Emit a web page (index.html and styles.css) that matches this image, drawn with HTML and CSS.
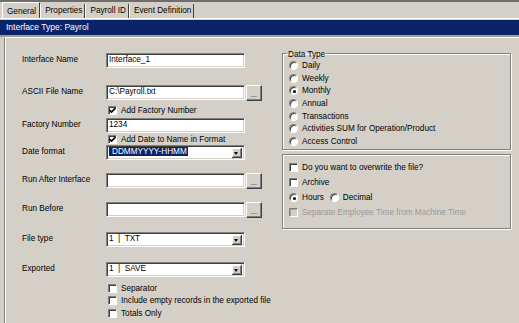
FILE: index.html
```html
<!DOCTYPE html>
<html lang="en">
<head>
    <meta charset="UTF-8">
    <title>Interface Settings</title>
    <link rel="stylesheet" href="styles.css">
</head>
<body>
    <div class="tabs">
        <div class="tab active">General</div>
        <div class="tab">Properties</div>
        <div class="tab">Payroll ID</div>
        <div class="tab">Event Definition</div>
    </div>
    <div class="caption">Interface Type: Payrol</div>

    <div class="panel">
        <div class="form">
            <div class="row first">
                <span class="label">Interface Name</span>
                <div class="edit">Interface_1</div>
            </div>
            <div class="row second">
                <span class="label">ASCII File Name</span>
                <div class="edit">C:\Payroll.txt</div>
                <div class="browse">...</div>
            </div>
            <div class="check below">
                <span class="box"><svg width="7" height="7" viewBox="0 0 7 7"><path d="M0.5 3 L2.5 5 L6.5 1" fill="none" stroke="#000" stroke-width="1.6"/></svg></span>
                Add Factory Number
            </div>
            <div class="row tight">
                <span class="label">Factory Number</span>
                <div class="edit">1234</div>
            </div>
            <div class="check between">
                <span class="box"><svg width="7" height="7" viewBox="0 0 7 7"><path d="M0.5 3 L2.5 5 L6.5 1" fill="none" stroke="#000" stroke-width="1.6"/></svg></span>
                Add Date to Name in Format
            </div>
            <div class="row closer">
                <span class="label">Date format</span>
                <div class="edit combo"><span class="picked">DDMMYYYY-HHMM</span><span class="drop"></span></div>
            </div>
            <div class="row near">
                <span class="label">Run After Interface</span>
                <div class="edit"></div>
                <div class="browse">...</div>
            </div>
            <div class="row">
                <span class="label">Run Before</span>
                <div class="edit"></div>
                <div class="browse">...</div>
            </div>
            <div class="row wide">
                <span class="label">File type</span>
                <div class="edit combo">1&nbsp; |&nbsp; TXT<span class="drop"></span></div>
            </div>
            <div class="row wide">
                <span class="label">Exported</span>
                <div class="edit combo">1&nbsp; |&nbsp; SAVE<span class="drop"></span></div>
            </div>
            <div class="check after">
                <span class="box"></span>Separator
            </div>
            <div class="check list">
                <span class="box"></span>Include empty records in the exported file
            </div>
            <div class="check list">
                <span class="box"></span>Totals Only
            </div>
        </div>

        <div class="side">
            <fieldset class="group types">
                <legend>Data Type</legend>
                <div class="option"><span class="radio"></span>Daily</div>
                <div class="option"><span class="radio"></span>Weekly</div>
                <div class="option"><span class="radio on"></span>Monthly</div>
                <div class="option"><span class="radio"></span>Annual</div>
                <div class="option"><span class="radio"></span>Transactions</div>
                <div class="option"><span class="radio"></span>Activities SUM for Operation/Product</div>
                <div class="option"><span class="radio"></span>Access Control</div>
            </fieldset>

            <fieldset class="group extras">
                <div class="option"><span class="box"></span>Do you want to overwrite the file?</div>
                <div class="option"><span class="box"></span>Archive</div>
                <div class="option">
                    <span class="radio on"></span>Hours
                    <span class="radio spaced"></span>Decimal
                </div>
                <div class="option disabled"><span class="box"></span>Separate Employee Time from Machine Time</div>
            </fieldset>
        </div>
    </div>
</body>
</html>
```

FILE: styles.css
```css
body {
    margin: 0;
    width: 519px;
    height: 323px;
    overflow: hidden;
    background: #d4d0c8;
    font-family: "Liberation Sans", Arial, sans-serif;
    font-size: 8.2px;
    color: #000;
}

/* tab strip */
.tabs {
    display: flex;
    align-items: flex-end;
    height: 16px;
    padding-left: 2px;
    border-top: 2px solid #6e6e6e;
    border-bottom: 1px solid #fff;
}
.tab {
    height: 14px;
    line-height: 14px;
    padding: 0 2px 0 4px;
    border-left: 1px solid #fff;
    border-right: 1px solid #404040;
}
.tab.active {
    height: 16px;
    line-height: 17px;
    padding-right: 3px;
    border-top: 1px solid #fff;
    box-sizing: border-box;
}

.caption {
    margin-top: 1px;
    height: 15px;
    line-height: 15px;
    padding-left: 6px;
    background: #0a246a;
    color: #fff;
    font-size: 8.5px;
    border-bottom: 2px solid #a09c94;
}

.panel {
    display: flex;
    margin-left: 4px;
    height: 285px;
    border-top: 1px solid #fff;
    border-left: 1px solid #808080;
    box-shadow: inset 1px 0 #fff;
}

/* left column */
.form {
    width: 257px;
    padding-left: 17px;
}
.row {
    display: flex;
    align-items: center;
    height: 15px;
    margin-top: 14px;
}
.row.first {
    margin-top: 15px;
}
.row.second {
    margin-top: 17px;
}
.row.tight {
    margin-top: 3px;
}
.row.closer {
    margin-top: 1px;
}
.row.near {
    margin-top: 13px;
}
.row.wide {
    margin-top: 15px;
}
.label {
    width: 84px;
    margin-bottom: 2px;
}
.edit {
    position: relative;
    box-sizing: border-box;
    width: 139px;
    height: 15px;
    line-height: 12px;
    padding-left: 2px;
    background: #fff;
    border-top: 1px solid #808080;
    border-left: 1px solid #808080;
    border-right: 1px solid #fff;
    border-bottom: 1px solid #fff;
    box-shadow: inset 1px 1px #404040, inset -1px -1px #d4d0c8;
    white-space: nowrap;
}
.combo .drop {
    position: absolute;
    right: 2px;
    top: 2px;
    width: 9px;
    height: 9px;
    background: #d4d0c8;
    border-right: 1px solid #404040;
    border-bottom: 1px solid #404040;
    box-shadow: inset 1px 1px #fff, inset -1px -1px #808080;
}
.combo .drop::after {
    content: "";
    position: absolute;
    left: 2px;
    top: 4px;
    border-left: 2.5px solid transparent;
    border-right: 2.5px solid transparent;
    border-top: 3px solid #000;
}
.picked {
    display: inline-block;
    padding: 0 1px 0 3px;
    line-height: 9px;
    margin-top: 1px;
    background: #0a246a;
    color: #fff;
}
.browse {
    box-sizing: border-box;
    width: 16px;
    height: 16px;
    margin-left: 1px;
    line-height: 17px;
    text-align: center;
    font-size: 7px;
    border-top: 1px solid #fff;
    border-left: 1px solid #fff;
    border-right: 1px solid #404040;
    border-bottom: 1px solid #404040;
    box-shadow: inset -1px -1px #808080;
}

.check {
    display: flex;
    align-items: center;
    height: 10px;
    padding-left: 86px;
}
.check.below {
    margin-top: 5px;
}
.check.between {
    margin-top: 1px;
}
.check.after {
    margin-top: 6px;
}
.check.list {
    margin-top: 2.5px;
}

.box {
    box-sizing: border-box;
    display: inline-flex;
    align-items: center;
    justify-content: center;
    width: 9px;
    height: 9px;
    margin-right: 4px;
    background: #fff;
    border-top: 1px solid #808080;
    border-left: 1px solid #808080;
    border-right: 1px solid #fff;
    border-bottom: 1px solid #fff;
    box-shadow: inset 1px 1px #404040;
}

/* right column */
.side {
    margin-left: 3px;
    width: 229px;
}
.group {
    margin: 0;
    padding: 0 0 0 6px;
    border: 1px solid #808080;
    box-shadow: inset 1px 1px #fff, 1px 1px #fff;
    min-width: 0;
}
.group legend {
    padding: 4px 1px 0;
    margin-left: -2px;
    margin-bottom: -1px;
    line-height: 10px;
}
.types {
    margin-top: 8px;
    padding-bottom: 1px;
}
.types .option {
    height: 12.7px;
}
.extras {
    margin-top: 4px;
    padding-top: 5.5px;
    padding-bottom: 8px;
}
.extras .option {
    height: 15px;
}
.option {
    display: flex;
    align-items: center;
}
.radio {
    position: relative;
    box-sizing: border-box;
    width: 9px;
    height: 9px;
    margin-right: 4px;
    border-radius: 50%;
    background: #fff;
    border: 1px solid;
    border-color: #808080 #fff #fff #808080;
    box-shadow: inset 1px 1px #404040;
}
.radio.on::after {
    content: "";
    position: absolute;
    left: 2.5px;
    top: 2.5px;
    width: 3px;
    height: 3px;
    border-radius: 50%;
    background: #000;
}
.radio.spaced {
    margin-left: 6px;
}
.disabled {
    color: #999;
}
.disabled .box {
    background: #d4d0c8;
    box-shadow: inset 1px 1px #a0a0a0;
}
```
